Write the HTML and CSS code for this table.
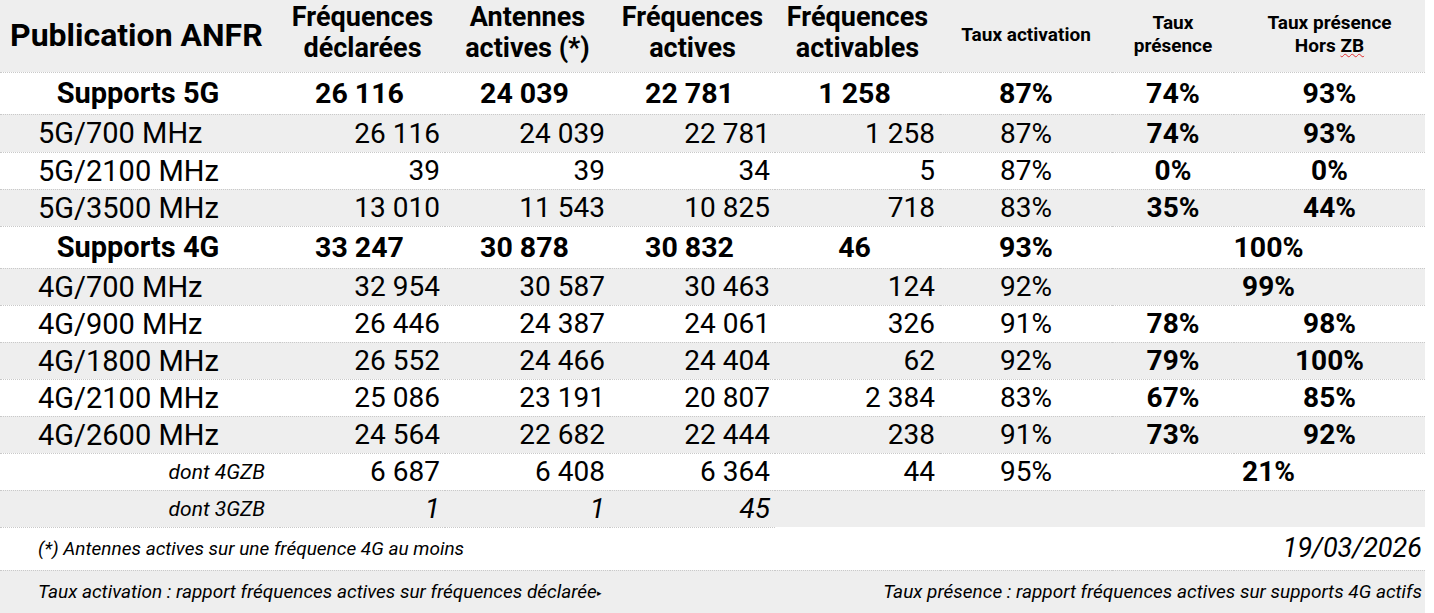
FILE: index.html
```html
<!DOCTYPE html>
<html lang="fr">
<head>
<meta charset="utf-8">
<title>Publication ANFR</title>
<link rel="stylesheet" href="styles.css">
</head>
<body>
<table class="anfr">
  <colgroup>
    <col class="c-label">
    <col class="c-num">
    <col class="c-num">
    <col class="c-num">
    <col class="c-num">
    <col class="c-act">
    <col class="c-pres">
    <col class="c-hzb">
  </colgroup>
  <thead>
    <tr class="head">
      <th class="title">Publication ANFR</th>
      <th class="big">Fréquences<br>déclarées</th>
      <th class="big">Antennes<br>actives (*)</th>
      <th class="big">Fréquences<br>actives</th>
      <th class="big">Fréquences<br>activables</th>
      <th class="small">Taux activation</th>
      <th class="small">Taux<br>présence</th>
      <th class="small">Taux présence<br>Hors <span class="spell">ZB</span></th>
    </tr>
  </thead>
  <tbody>
    <tr class="total">
      <td class="lbl-total">Supports 5G</td>
      <td class="tnum">26&nbsp;116</td>
      <td class="tnum">24&nbsp;039</td>
      <td class="tnum">22&nbsp;781</td>
      <td class="tnum">1&nbsp;258</td>
      <td class="pct b">87%</td>
      <td class="pct b">74%</td>
      <td class="pct b">93%</td>
    </tr>
    <tr class="row gray first">
      <td class="lbl">5G/700 MHz</td>
      <td class="num">26&nbsp;116</td>
      <td class="num">24&nbsp;039</td>
      <td class="num">22&nbsp;781</td>
      <td class="num">1&nbsp;258</td>
      <td class="pct">87%</td>
      <td class="pct b">74%</td>
      <td class="pct b">93%</td>
    </tr>
    <tr class="row">
      <td class="lbl">5G/2100 MHz</td>
      <td class="num">39</td>
      <td class="num">39</td>
      <td class="num">34</td>
      <td class="num">5</td>
      <td class="pct">87%</td>
      <td class="pct b">0%</td>
      <td class="pct b">0%</td>
    </tr>
    <tr class="row gray">
      <td class="lbl">5G/3500 MHz</td>
      <td class="num">13&nbsp;010</td>
      <td class="num">11&nbsp;543</td>
      <td class="num">10&nbsp;825</td>
      <td class="num">718</td>
      <td class="pct">83%</td>
      <td class="pct b">35%</td>
      <td class="pct b">44%</td>
    </tr>
    <tr class="total">
      <td class="lbl-total">Supports 4G</td>
      <td class="tnum">33&nbsp;247</td>
      <td class="tnum">30&nbsp;878</td>
      <td class="tnum">30&nbsp;832</td>
      <td class="tnum">46</td>
      <td class="pct b">93%</td>
      <td class="pct b" colspan="2">100%</td>
    </tr>
    <tr class="row gray">
      <td class="lbl">4G/700 MHz</td>
      <td class="num">32&nbsp;954</td>
      <td class="num">30&nbsp;587</td>
      <td class="num">30&nbsp;463</td>
      <td class="num">124</td>
      <td class="pct">92%</td>
      <td class="pct b" colspan="2">99%</td>
    </tr>
    <tr class="row">
      <td class="lbl">4G/900 MHz</td>
      <td class="num">26&nbsp;446</td>
      <td class="num">24&nbsp;387</td>
      <td class="num">24&nbsp;061</td>
      <td class="num">326</td>
      <td class="pct">91%</td>
      <td class="pct b">78%</td>
      <td class="pct b">98%</td>
    </tr>
    <tr class="row gray">
      <td class="lbl">4G/1800 MHz</td>
      <td class="num">26&nbsp;552</td>
      <td class="num">24&nbsp;466</td>
      <td class="num">24&nbsp;404</td>
      <td class="num">62</td>
      <td class="pct">92%</td>
      <td class="pct b">79%</td>
      <td class="pct b">100%</td>
    </tr>
    <tr class="row">
      <td class="lbl">4G/2100 MHz</td>
      <td class="num">25&nbsp;086</td>
      <td class="num">23&nbsp;191</td>
      <td class="num">20&nbsp;807</td>
      <td class="num">2&nbsp;384</td>
      <td class="pct">83%</td>
      <td class="pct b">67%</td>
      <td class="pct b">85%</td>
    </tr>
    <tr class="row gray">
      <td class="lbl">4G/2600 MHz</td>
      <td class="num">24&nbsp;564</td>
      <td class="num">22&nbsp;682</td>
      <td class="num">22&nbsp;444</td>
      <td class="num">238</td>
      <td class="pct">91%</td>
      <td class="pct b">73%</td>
      <td class="pct b">92%</td>
    </tr>
    <tr class="row">
      <td class="lbl-dont">dont 4GZB</td>
      <td class="num">6&nbsp;687</td>
      <td class="num">6&nbsp;408</td>
      <td class="num">6&nbsp;364</td>
      <td class="num">44</td>
      <td class="pct">95%</td>
      <td class="pct b" colspan="2">21%</td>
    </tr>
    <tr class="row gray last">
      <td class="lbl-dont">dont 3GZB</td>
      <td class="num it">1</td>
      <td class="num it">1</td>
      <td class="num it">45</td>
      <td class="empty"></td>
      <td class="empty"></td>
      <td class="empty"></td>
      <td class="empty"></td>
    </tr>
    <tr class="note">
      <td class="note-left" colspan="5">(*) Antennes actives sur une fréquence 4G au moins</td>
      <td class="note-date" colspan="3">19/03/2026</td>
    </tr>
    <tr class="foot gray">
      <td class="foot-left" colspan="4">Taux activation : rapport fréquences actives sur fréquences déclarée<span class="overflow">&#9656;</span></td>
      <td class="foot-right" colspan="4">Taux présence : rapport fréquences actives sur supports 4G actifs</td>
    </tr>
  </tbody>
</table>
</body>
</html>
```

FILE: styles.css
```css
html, body {
  margin: 0;
  padding: 0;
  background: #ffffff;
}

body {
  font-family: Roboto, "Noto Sans", "Liberation Sans", sans-serif;
  color: #000000;
}

.anfr {
  border-collapse: collapse;
  table-layout: fixed;
  width: 1425px;
}

.c-label { width: 280px; }
.c-num { width: 165px; }
.c-act { width: 172px; }
.c-pres { width: 122px; }
.c-hzb { width: 191px; }

th,
td {
  padding: 0;
  border-bottom: 1px dotted #c9c9c9;
  vertical-align: middle;
  white-space: nowrap;
  overflow: visible;
}

.gray td,
.head th {
  background: #eeeeee;
}

.head {
  height: 72px;
}

.head th {
  font-weight: 700;
  text-align: center;
}

.head .title {
  font-size: 32px;
  text-align: left;
  padding-left: 10px;
  padding-bottom: 2px;
}

.head .big {
  font-size: 27px;
  line-height: 31px;
  padding-bottom: 5px;
}

.head .small {
  font-size: 19px;
  line-height: 23px;
  padding-bottom: 3px;
}

.spell {
  text-decoration: underline wavy #e23030;
  text-decoration-thickness: 1px;
  text-underline-offset: 1px;
}

.total {
  height: 42px;
}

.row {
  height: 37px;
}

.row.first {
  height: 38px;
}

.total td {
  font-size: 28.5px;
  font-weight: 700;
}

.total .lbl-total {
  font-size: 29px;
  text-align: center;
  padding-right: 4px;
}

.total .tnum {
  text-align: center;
  padding-right: 6px;
}

.row td {
  font-size: 28px;
}

.row .lbl {
  font-size: 29px;
  text-align: left;
  padding-left: 38px;
}

.row .num {
  text-align: right;
  padding-right: 5px;
}

.pct {
  text-align: center;
}

.b {
  font-weight: 700;
}

.row .lbl-dont {
  font-size: 21px;
  font-style: italic;
  text-align: right;
  padding-right: 15px;
}

.it {
  font-style: italic;
}

.last .empty {
  border-bottom: none;
}

.note {
  height: 43px;
}

.note td {
  font-style: italic;
}

.note .note-left {
  font-size: 19px;
  padding-left: 38px;
  text-align: left;
}

.note .note-date {
  font-size: 27px;
  text-align: right;
  padding-right: 3px;
}

.foot {
  height: 43px;
}

.foot td {
  font-style: italic;
  font-size: 19px;
  border-bottom: none;
}

.foot .foot-left {
  padding-left: 38px;
  text-align: left;
}

.foot .foot-right {
  text-align: right;
  padding-right: 3px;
}

.overflow {
  font-style: normal;
  font-size: 9px;
  vertical-align: middle;
}
```
